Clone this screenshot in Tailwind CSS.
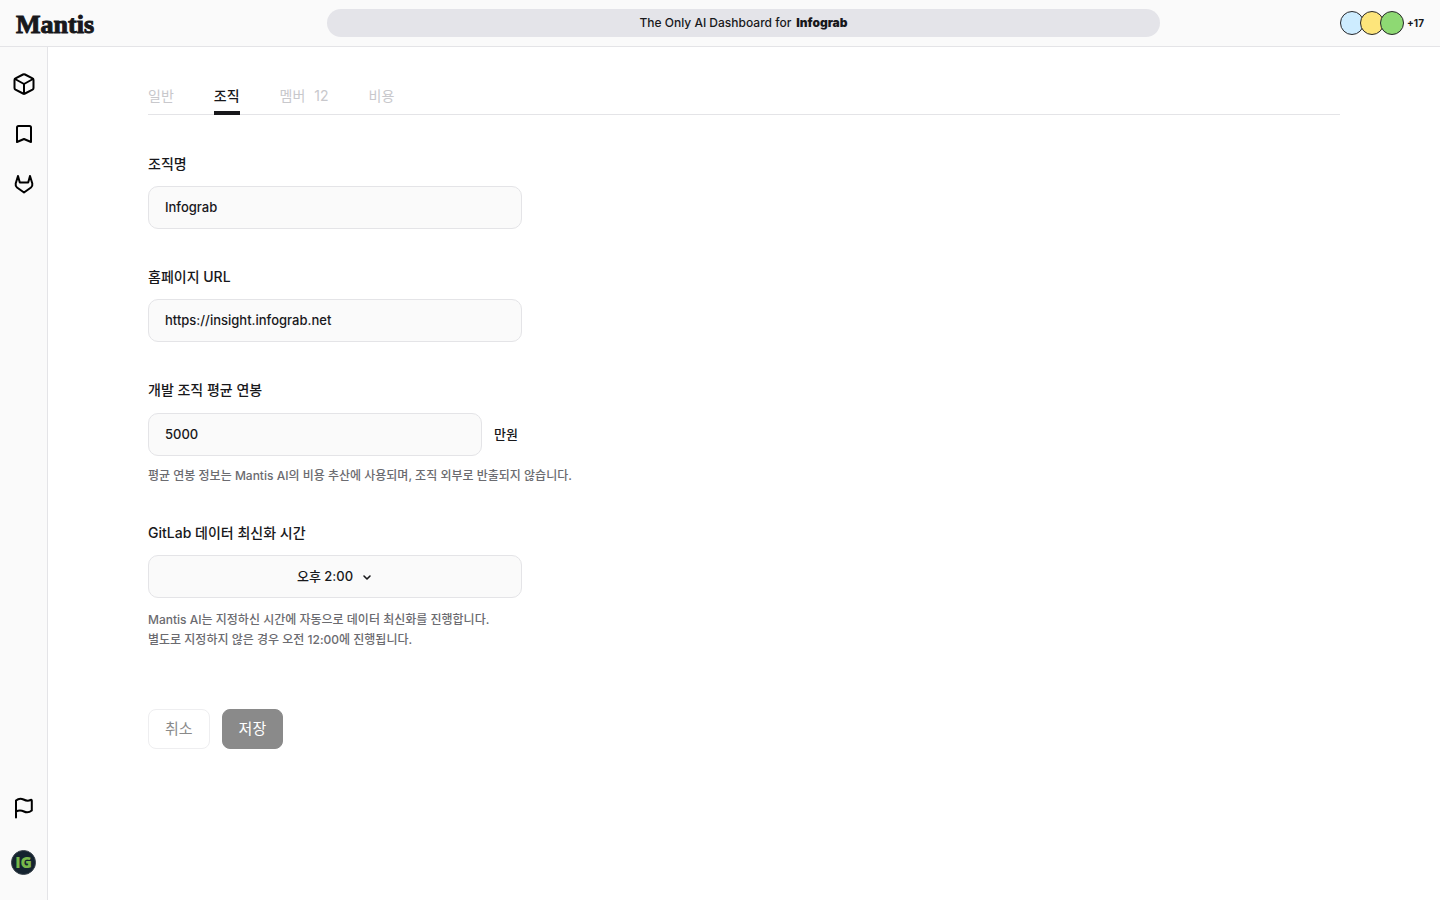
<!DOCTYPE html>
<html lang="ko">
<head>
  <meta charset="UTF-8" />
  <meta name="viewport" content="width=device-width, initial-scale=1.0" />
  <title>Mantis - 조직 설정</title>
  <script src="https://cdn.jsdelivr.net/npm/@tailwindcss/browser@4"></script>
</head>
<body class="min-h-screen flex flex-col bg-white text-[#18181b] font-[Inter,'Noto_Sans_CJK_KR',sans-serif] font-medium">

  <!-- Header -->
  <header class="grid grid-cols-[311px_1fr_264px] items-center h-[47px] px-4 bg-[#fafafa] border-b border-[#e4e4e7]">
    <a href="#" class="pt-[3px] font-['Liberation_Serif',serif] font-bold text-[26px] leading-7 [-webkit-text-stroke:1px_#18181b]">Mantis</a>
    <p class="flex items-center justify-center gap-[5px] h-7 rounded-full bg-[#e4e4e9] text-[12px]">
      <span>The Only AI Dashboard for</span>
      <strong class="font-black">Infograb</strong>
    </p>
    <div class="flex items-center justify-end">
      <span class="size-6 rounded-full border border-[#27272a] bg-[#cdecff]"></span>
      <span class="size-6 -ml-1 rounded-full border border-[#27272a] bg-[#fde57b]"></span>
      <span class="size-6 -ml-1 rounded-full border border-[#27272a] bg-[#8ed973]"></span>
      <span class="ml-[3px] text-[10px] font-bold">+17</span>
    </div>
  </header>

  <div class="flex flex-1">
    <!-- Sidebar -->
    <aside class="flex flex-col items-center justify-between w-12 shrink-0 pt-[25px] pb-[25px] bg-[#fafafa] border-r border-[#e4e4e7] text-black">
      <nav class="flex flex-col gap-[26px]">
        <a href="#" aria-label="프로젝트">
          <svg class="size-6" viewBox="0 0 24 24" fill="none" stroke="currentColor" stroke-width="2" stroke-linecap="round" stroke-linejoin="round">
            <path d="M11 2.500Q12 2 13 2.500L20.500 6.400Q21.500 7 21.500 8v8Q21.500 17 20.500 17.600L13 21.500Q12 22 11 21.500L3.500 17.600Q2.500 17 2.500 16V8Q2.500 7 3.500 6.400z" />
            <path d="M3 7l9 5 9-5M12 12v9.500" />
          </svg>
        </a>
        <a href="#" aria-label="북마크">
          <svg class="size-6" viewBox="0 0 24 24" fill="none" stroke="currentColor" stroke-width="2" stroke-linecap="round" stroke-linejoin="round">
            <path d="M5 20V5.500Q5 4 6.500 4h11Q19 4 19 5.500V20l-7-3z" />
          </svg>
        </a>
        <a href="#" aria-label="GitLab">
          <svg class="size-6" viewBox="0 0 24 24" fill="none" stroke="currentColor" stroke-width="2" stroke-linecap="round" stroke-linejoin="round">
            <path d="M6 4 3.700 11.500Q3.200 14 5 15.500L12 20.500l7-5q1.800-1.500 1.300-4L18 4l-1.800 6.500H7.800z" />
          </svg>
        </a>
      </nav>
      <div class="flex flex-col items-center gap-[30px]">
        <a href="#" aria-label="신고">
          <svg class="size-6" viewBox="0 0 24 24" fill="none" stroke="currentColor" stroke-width="2" stroke-linecap="round" stroke-linejoin="round">
            <path d="M4 21.500V4.500Q7.500 1.500 11.500 3.500T18.500 4Q19.800 3.500 19.800 4.800V14.500Q16 17.500 12 15.500T4 15.500" />
          </svg>
        </a>
        <a href="#" aria-label="내 계정">
          <svg class="size-[25px]" viewBox="0 0 26 26">
            <circle cx="13" cy="13" r="12.500" fill="#14232f" stroke="#3a444c" />
            <text x="13" y="19" text-anchor="middle" fill="#78b74a" class="font-['Open_Sans',sans-serif] font-extrabold text-[16px]">IG</text>
          </svg>
        </a>
      </div>
    </aside>

    <main class="flex-1 px-[100px] pt-[39px]">
      <!-- Tabs -->
      <nav class="flex gap-10 border-b border-[#e4e4e7] text-[14px] leading-5">
        <a href="#" class="-mb-px pb-[5px] border-b-4 border-transparent font-normal text-[#c8c8cc]">일반</a>
        <a href="#" aria-current="page" class="-mb-px pb-[5px] border-b-4 border-[#18181b]">조직</a>
        <a href="#" class="flex gap-[9px] -mb-px pb-[5px] border-b-4 border-transparent font-normal text-[#c8c8cc]"><span>멤버</span><span>12</span></a>
        <a href="#" class="-mb-px pb-[5px] border-b-4 border-transparent font-normal text-[#c8c8cc]">비용</a>
      </nav>

      <!-- Organization form -->
      <form class="mt-[39px]">
        <div class="flex flex-col gap-[38px]">
          <div>
            <label for="org-name" class="block text-[14px] leading-5">조직명</label>
            <input id="org-name" type="text" value="Infograb" class="block mt-3 w-[374px] h-[43px] px-4 pb-px rounded-[10px] border border-[#e4e4e7] bg-[#fafafa] text-[13px]" />
          </div>

          <div>
            <label for="org-url" class="block text-[14px] leading-5">홈페이지 URL</label>
            <input id="org-url" type="text" value="https://insight.infograb.net" class="block mt-3 w-[374px] h-[43px] px-4 pb-px rounded-[10px] border border-[#e4e4e7] bg-[#fafafa] text-[13px]" />
          </div>

          <div>
            <label for="org-salary" class="block text-[14px] leading-5">개발 조직 평균 연봉</label>
            <div class="flex items-center gap-3 mt-[13px] text-[13px]">
              <input id="org-salary" type="text" value="5000" class="w-[334px] h-[43px] px-4 pb-px rounded-[10px] border border-[#e4e4e7] bg-[#fafafa]" />
              <span>만원</span>
            </div>
            <p class="mt-2.5 text-[12px] leading-5 text-[#6b6b70]">평균 연봉 정보는 Mantis AI의 비용 추산에 사용되며, 조직 외부로 반출되지 않습니다.</p>
          </div>

          <div class="-mt-px">
            <label for="sync-time" class="block text-[14px] leading-5">GitLab 데이터 최신화 시간</label>
            <div class="flex items-center justify-center gap-2 mt-3 w-[374px] h-[43px] rounded-[10px] border border-[#e4e4e7] bg-[#fafafa] text-[13px]">
              <select id="sync-time" class="appearance-none field-sizing-content">
                <option>오후 2:00</option>
              </select>
              <svg class="size-3" viewBox="0 0 12 12" fill="none" stroke="currentColor" stroke-width="1.600" stroke-linecap="round" stroke-linejoin="round">
                <path d="m3 5 3 3 3-3" />
              </svg>
            </div>
            <p class="mt-3 text-[12px] leading-5 text-[#6b6b70]">Mantis AI는 지정하신 시간에 자동으로 데이터 최신화를 진행합니다.<br />별도로 지정하지 않은 경우 오전 12:00에 진행됩니다.</p>
          </div>
        </div>

        <div class="flex gap-3 mt-[59px] text-[15px] font-normal">
          <button type="button" class="h-10 px-4 rounded-[8px] border border-[#eeeef0] text-[#8a8a8a]">취소</button>
          <button type="submit" class="h-10 px-4 rounded-[8px] border border-[#8a8a8a] bg-[#8a8a8a] text-white">저장</button>
        </div>
      </form>
    </main>
  </div>

</body>
</html>
